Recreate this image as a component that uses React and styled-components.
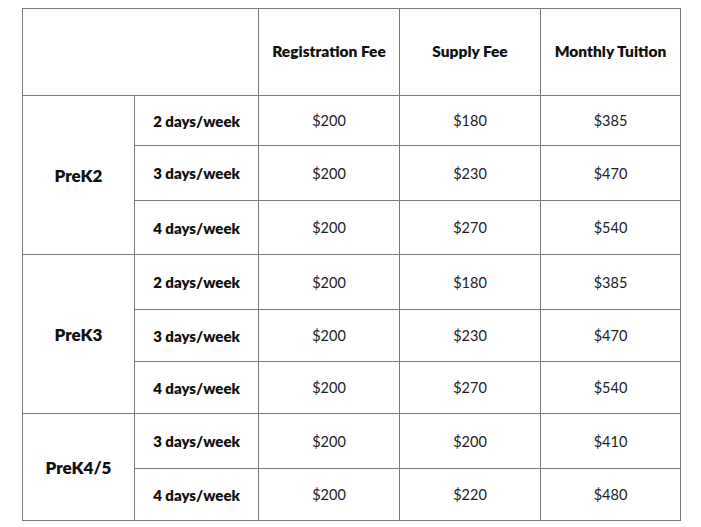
import React from 'react'
import styled, { createGlobalStyle } from 'styled-components'

const GlobalStyle = createGlobalStyle`
  body {
    margin: 0;
    padding: 8px 0 0 22px;
    background: #ffffff;
    font-family: Lato, "Noto Sans", sans-serif;
    color: #111111;
  }
`

//DATA
const programs = [
  {
    name: 'PreK2',
    rows: [
      { days: '2 days/week', reg: '$200', supply: '$180', tuition: '$385', h: 50 },
      { days: '3 days/week', reg: '$200', supply: '$230', tuition: '$470', h: 55 },
      { days: '4 days/week', reg: '$200', supply: '$270', tuition: '$540', h: 54 },
    ],
  },
  {
    name: 'PreK3',
    rows: [
      { days: '2 days/week', reg: '$200', supply: '$180', tuition: '$385', h: 55 },
      { days: '3 days/week', reg: '$200', supply: '$230', tuition: '$470', h: 52 },
      { days: '4 days/week', reg: '$200', supply: '$270', tuition: '$540', h: 52 },
    ],
  },
  {
    name: 'PreK4/5',
    rows: [
      { days: '3 days/week', reg: '$200', supply: '$200', tuition: '$410', h: 55 },
      { days: '4 days/week', reg: '$200', supply: '$220', tuition: '$480', h: 52 },
    ],
  },
]

const App = () => {
  return (
    <>
      <GlobalStyle />
      <Table>
        <colgroup>
          <col style={{ width: 112 }} />
          <col style={{ width: 124 }} />
          <col style={{ width: 141 }} />
          <col style={{ width: 141 }} />
          <col style={{ width: 140 }} />
        </colgroup>
        <thead>
          <Row $h={87}>
            <Cell colSpan={2} />
            <HeadCell>Registration Fee</HeadCell>
            <HeadCell>Supply Fee</HeadCell>
            <HeadCell>Monthly Tuition</HeadCell>
          </Row>
        </thead>
        <tbody>
          {programs.map((p) =>
            p.rows.map((r, i) => (
              <Row key={p.name + i} $h={r.h}>
                {i === 0 && <ProgramCell rowSpan={p.rows.length}>{p.name}</ProgramCell>}
                <DaysCell>{r.days}</DaysCell>
                <Cell>{r.reg}</Cell>
                <Cell>{r.supply}</Cell>
                <Cell>{r.tuition}</Cell>
              </Row>
            ))
          )}
        </tbody>
      </Table>
    </>
  )
}

const Table = styled.table`
  width: 658px;
  table-layout: fixed;
  border-collapse: collapse;
  border: 1px solid #9a9a9a;
`

const Row = styled.tr`
  height: ${(p) => p.$h}px;
`

const Cell = styled.td`
  border: 1px solid #7a7a7a;
  padding: 0;
  text-align: center;
  vertical-align: middle;
  font-size: 14.5px;
  font-weight: 400;
  color: #222222;
`

const HeadCell = styled(Cell)`
  font-weight: 800;
  font-size: 15.5px;
  color: #111111;
  padding-bottom: 2px;
`

const DaysCell = styled(Cell)`
  font-weight: 800;
  font-size: 15px;
  color: #111111;
`

const ProgramCell = styled(Cell)`
  font-weight: 800;
  font-size: 17px;
  color: #111111;
`

export default App
